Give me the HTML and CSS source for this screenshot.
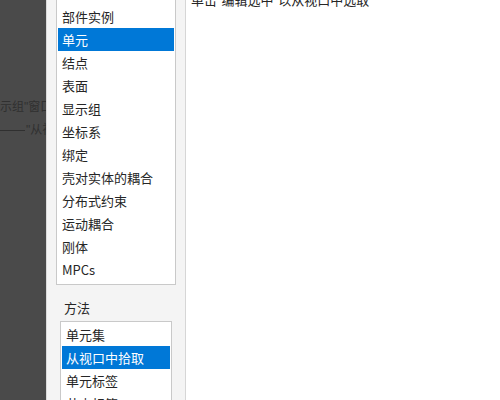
FILE: index.html
```html
<!doctype html>
<html lang="zh">
 <head>
  <meta charset="UTF-8">
  <title>单元拾取</title>
  <link rel="stylesheet" href="styles.css">
 </head>
 <body>
  <div id="all">
   <!-- 背后的文档 -->
   <div class="backdrop">
    <div class="bd_line bd_first">显示组"窗口</div>
    <div class="bd_line bd_second"><span class="dash"></span>"从视口</div>
   </div>

   <!-- 对话框 -->
   <div class="dialog">
    <div class="side">
     <ul class="list list_top">
      <li>部件实例</li>
      <li class="sel">单元</li>
      <li>结点</li>
      <li>表面</li>
      <li>显示组</li>
      <li>坐标系</li>
      <li>绑定</li>
      <li>壳对实体的耦合</li>
      <li>分布式约束</li>
      <li>运动耦合</li>
      <li>刚体</li>
      <li>MPCs</li>
     </ul>

     <div class="label">方法</div>
     <ul class="list list_method">
      <li>单元集</li>
      <li class="sel">从视口中拾取</li>
      <li>单元标签</li>
      <li>节点标签</li>
     </ul>
    </div>

    <div class="main">
     <div class="hint">单击"编辑选中"以从视口中选取</div>
    </div>
   </div>
  </div>
 </body>
</html>
```

FILE: styles.css
```css
/* 전체 */
body {
margin: 0;
font-family: "Noto Sans CJK SC", "Noto Sans", sans-serif;
font-size: 13px;
color: #262626;
}

#all {
display: flex;
height: 400px;
width: 500px;
overflow: hidden;
}

/* 왼쪽 어두운 부분 */
.backdrop {
width: 46px;
flex: none;
background: #4a4a4a;
overflow: hidden;
color: #303030;
font-family: "Liberation Sans", "Noto Sans CJK SC", sans-serif;
font-size: 12px;
}

.bd_line {
white-space: nowrap;
height: 23px;
line-height: 23px;
}

.bd_first {
margin-top: 96px;
margin-left: -12px;
}

.bd_second {
display: flex;
align-items: center;
}

.dash {
flex: none;
width: 25px;
height: 1px;
background: #303030;
margin-right: 1px;
}

/* 대화상자 */
.dialog {
flex: 1;
display: flex;
}

.side {
width: 120px;
flex: none;
background: #f4f4f4;
border-left: 1px solid #dadada;
border-right: 1px solid #d6d6d6;
padding: 0 9px;
}

.list {
list-style: none;
margin: 0;
padding: 1px;
background: #fff;
border: 1px solid #c9c9c9;
}

.list li {
height: 23px;
line-height: 23px;
padding-left: 4px;
white-space: nowrap;
}

.list .sel {
background: #0078d7;
color: #fff;
}

.list_top {
margin-top: -1px;
padding-top: 5px;
padding-bottom: 3px;
}

.label {
margin: 10px 0 0 8px;
height: 26px;
line-height: 26px;
}

.list_method {
margin: 0 4px;
}

.main {
flex: 1;
background: #fff;
}

.hint {
margin: -8px 0 0 5px;
line-height: 18px;
font-family: "Liberation Sans", "Noto Sans CJK SC", sans-serif;
}
```
